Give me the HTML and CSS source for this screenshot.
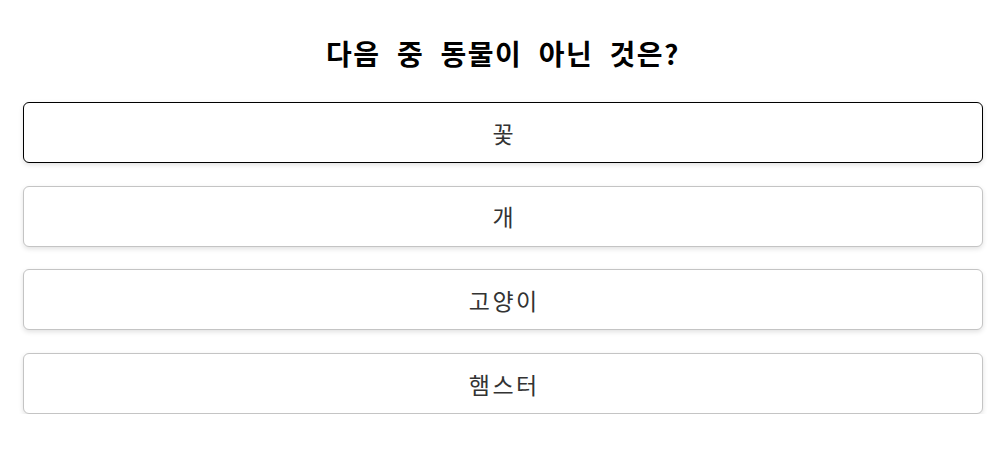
FILE: index.html
```html
<!DOCTYPE html>
<html lang="ko">
<head>
<meta charset="utf-8">
<link rel="stylesheet" href="styles.css">
</head>
<body>
<main class="quiz">
  <h2 class="question">다음 중 동물이 아닌 것은?</h2>
  <div class="options">
    <button class="option selected">꽃</button>
    <button class="option">개</button>
    <button class="option">고양이</button>
    <button class="option">햄스터</button>
  </div>
</main>
</body>
</html>
```

FILE: styles.css
```css
html, body {
  margin: 0;
  padding: 0;
  background: #fff;
}
body {
  font-family: "Noto Sans CJK KR", "Noto Sans", sans-serif;
  color: #333;
}
.quiz {
  width: 960px;
  margin-left: 23px;
  padding-top: 34px;
}
.question {
  margin: 0 0 30px;
  text-align: center;
  font-size: 28px;
  line-height: 38px;
  font-weight: 700;
  letter-spacing: 1.5px;
  word-spacing: 7px;
  color: #000;
}
.options {
  display: flex;
  flex-direction: column;
  gap: 22.7px;
}
.option {
  display: block;
  width: 100%;
  height: 61px;
  padding: 0 16px;
  background: #fff;
  border: 1px solid #c4c4c4;
  border-radius: 6px;
  box-shadow: 0 2px 5px rgba(0, 0, 0, 0.12);
  font-family: "Noto Sans CJK KR", "Noto Sans", sans-serif;
  font-size: 23px;
  letter-spacing: 2.5px;
  text-indent: 2.5px;
  color: #333;
  text-align: center;
}
.option.selected {
  border-color: #000;
}
```
